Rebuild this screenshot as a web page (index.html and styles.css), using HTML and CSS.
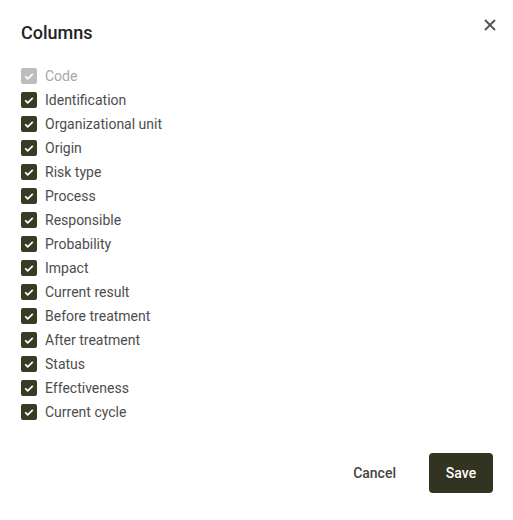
FILE: index.html
```html
<!DOCTYPE html>
<html>
<head>
<meta charset="utf-8">
<link rel="stylesheet" href="styles.css">
</head>
<body>
<div class="dialog">
  <div class="header">
    <h2 class="title">Columns</h2>
    <button class="close" aria-label="Close">
      <svg width="12" height="12" viewBox="0 0 12 12"><path d="M1 1L11 11M11 1L1 11" stroke="#555" stroke-width="1.9" fill="none"/></svg>
    </button>
  </div>
  <ul class="list">
    <li class="row disabled"><span class="box"><svg viewBox="0 0 16 16"><path d="M4.2 8.3l2.6 2.5 5-5" stroke="#fff" stroke-width="1.8" fill="none"/></svg></span>Code</li>
    <li class="row"><span class="box"><svg viewBox="0 0 16 16"><path d="M4.2 8.3l2.6 2.5 5-5" stroke="#fff" stroke-width="1.8" fill="none"/></svg></span>Identification</li>
    <li class="row"><span class="box"><svg viewBox="0 0 16 16"><path d="M4.2 8.3l2.6 2.5 5-5" stroke="#fff" stroke-width="1.8" fill="none"/></svg></span>Organizational unit</li>
    <li class="row"><span class="box"><svg viewBox="0 0 16 16"><path d="M4.2 8.3l2.6 2.5 5-5" stroke="#fff" stroke-width="1.8" fill="none"/></svg></span>Origin</li>
    <li class="row"><span class="box"><svg viewBox="0 0 16 16"><path d="M4.2 8.3l2.6 2.5 5-5" stroke="#fff" stroke-width="1.8" fill="none"/></svg></span>Risk type</li>
    <li class="row"><span class="box"><svg viewBox="0 0 16 16"><path d="M4.2 8.3l2.6 2.5 5-5" stroke="#fff" stroke-width="1.8" fill="none"/></svg></span>Process</li>
    <li class="row"><span class="box"><svg viewBox="0 0 16 16"><path d="M4.2 8.3l2.6 2.5 5-5" stroke="#fff" stroke-width="1.8" fill="none"/></svg></span>Responsible</li>
    <li class="row"><span class="box"><svg viewBox="0 0 16 16"><path d="M4.2 8.3l2.6 2.5 5-5" stroke="#fff" stroke-width="1.8" fill="none"/></svg></span>Probability</li>
    <li class="row"><span class="box"><svg viewBox="0 0 16 16"><path d="M4.2 8.3l2.6 2.5 5-5" stroke="#fff" stroke-width="1.8" fill="none"/></svg></span>Impact</li>
    <li class="row"><span class="box"><svg viewBox="0 0 16 16"><path d="M4.2 8.3l2.6 2.5 5-5" stroke="#fff" stroke-width="1.8" fill="none"/></svg></span>Current result</li>
    <li class="row"><span class="box"><svg viewBox="0 0 16 16"><path d="M4.2 8.3l2.6 2.5 5-5" stroke="#fff" stroke-width="1.8" fill="none"/></svg></span>Before treatment</li>
    <li class="row"><span class="box"><svg viewBox="0 0 16 16"><path d="M4.2 8.3l2.6 2.5 5-5" stroke="#fff" stroke-width="1.8" fill="none"/></svg></span>After treatment</li>
    <li class="row"><span class="box"><svg viewBox="0 0 16 16"><path d="M4.2 8.3l2.6 2.5 5-5" stroke="#fff" stroke-width="1.8" fill="none"/></svg></span>Status</li>
    <li class="row"><span class="box"><svg viewBox="0 0 16 16"><path d="M4.2 8.3l2.6 2.5 5-5" stroke="#fff" stroke-width="1.8" fill="none"/></svg></span>Effectiveness</li>
    <li class="row"><span class="box"><svg viewBox="0 0 16 16"><path d="M4.2 8.3l2.6 2.5 5-5" stroke="#fff" stroke-width="1.8" fill="none"/></svg></span>Current cycle</li>
  </ul>
  <div class="actions">
    <button class="btn cancel">Cancel</button>
    <button class="btn save">Save</button>
  </div>
</div>
</body>
</html>
```
FILE: styles.css
```css
* { box-sizing: border-box; }
html, body { margin: 0; background: #fff; }
body { font-family: Roboto, "Liberation Sans", sans-serif; }
.dialog {
  width: 513px;
  height: 520px;
  padding: 21px 20px 0 21px;
  display: flex;
  flex-direction: column;
}
.header {
  display: flex;
  justify-content: space-between;
  align-items: flex-start;
  height: 24px;
}
.title {
  margin: 0;
  font-size: 18px;
  line-height: 24px;
  font-weight: 500;
  color: #222;
}
.close {
  border: 0;
  background: none;
  padding: 0;
  margin: -6px -7px 0 0;
  width: 20px;
  height: 20px;
  display: flex;
  align-items: center;
  justify-content: center;
  cursor: pointer;
}
.list {
  list-style: none;
  margin: 19px 0 0;
  padding: 0;
}
.row {
  display: flex;
  align-items: center;
  height: 24px;
  font-size: 14px;
  color: #4d4d4d;
}
.box {
  width: 16px;
  height: 16px;
  border-radius: 2px;
  background: #393b24;
  margin-right: 8px;
  display: flex;
}
.box svg { width: 16px; height: 16px; }
.row.disabled { color: #a8a8a8; }
.row.disabled .box { background: #bdbdbd; }
.actions {
  display: flex;
  justify-content: flex-end;
  align-items: center;
  margin-top: 29px;
  gap: 22px;
}
.btn {
  font-family: inherit;
  font-size: 14px;
  font-weight: 500;
  height: 40px;
  border: 0;
  border-radius: 4px;
  cursor: pointer;
}
.cancel {
  background: none;
  color: #444;
  padding: 0 11px;
}
.save {
  background: #323320;
  color: #fff;
  width: 64px;
}
```
